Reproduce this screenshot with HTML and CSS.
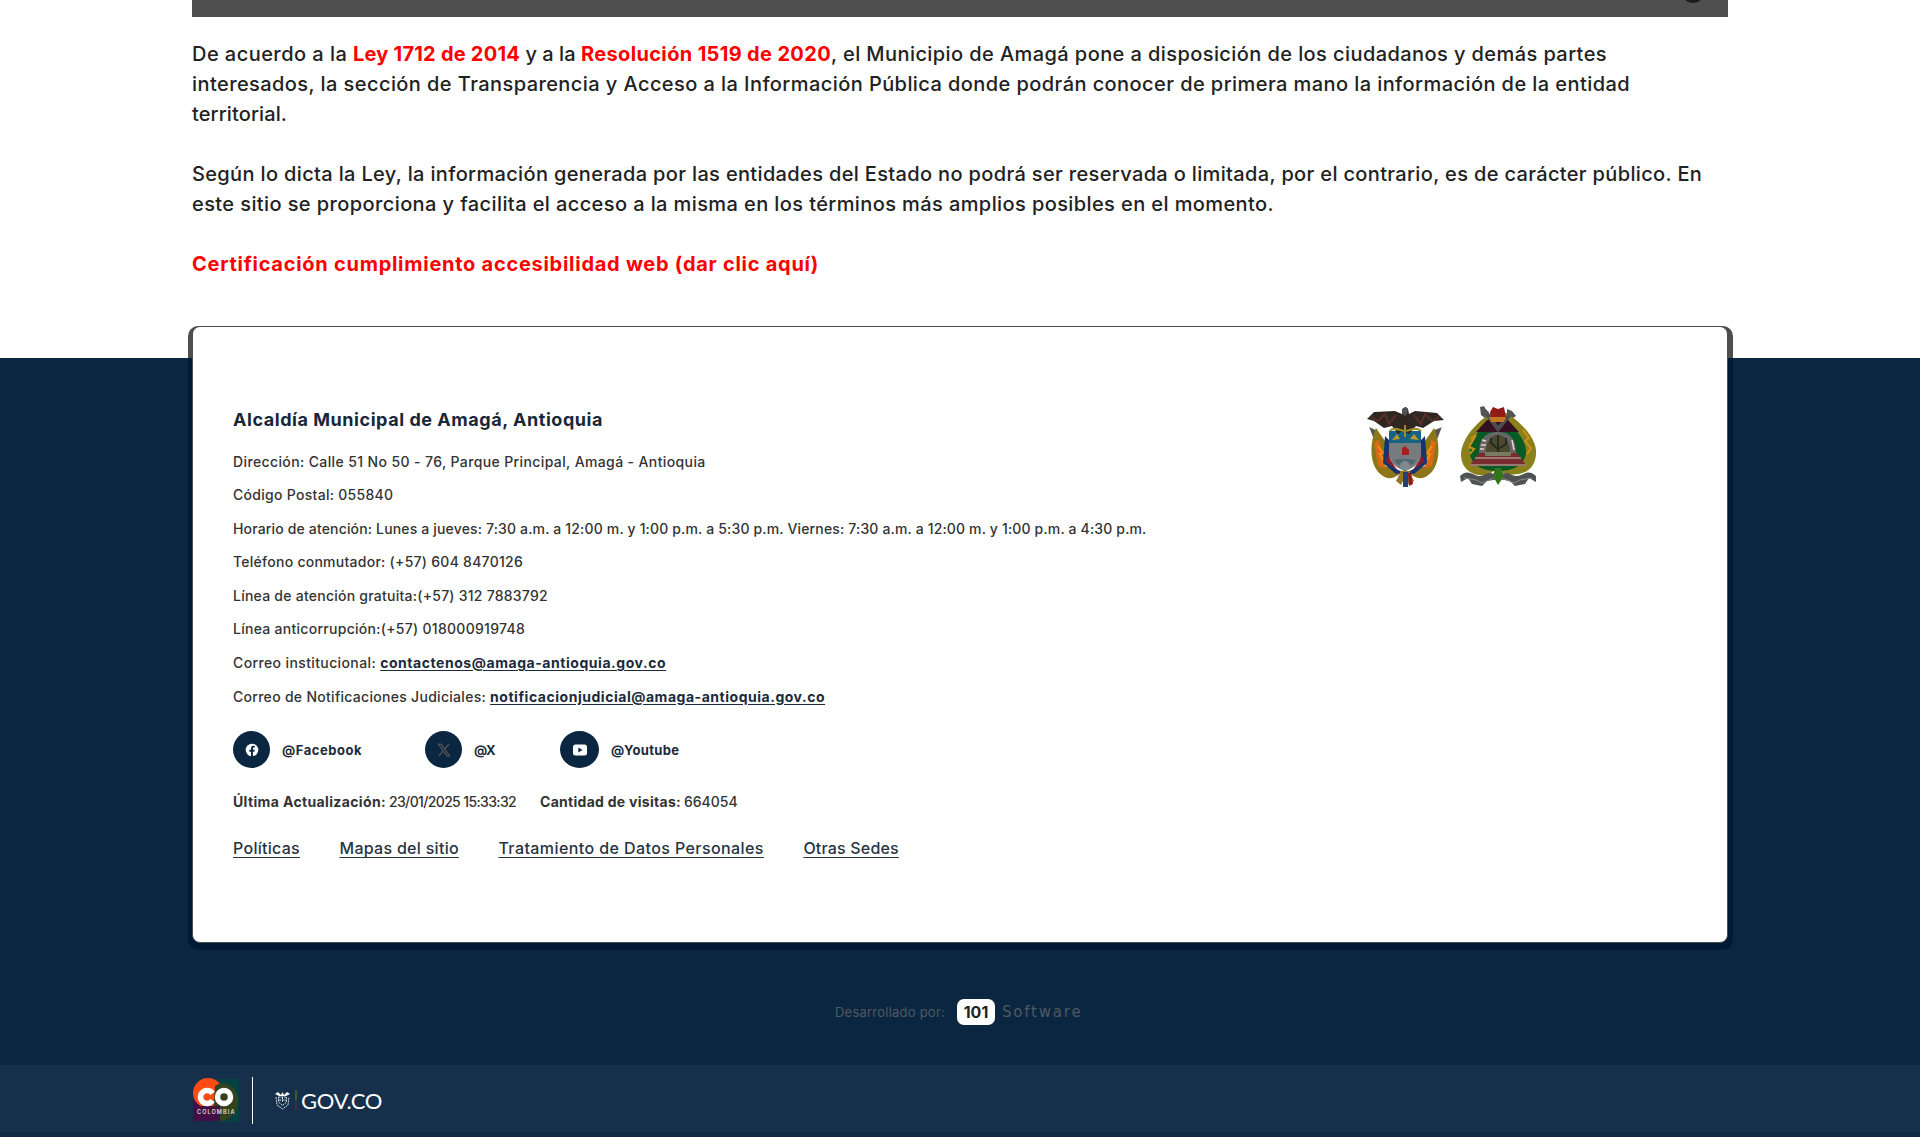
FILE: index.html
```html
<!DOCTYPE html>
<html lang="es">
<head>
<meta charset="utf-8">
<title>Transparencia - Alcaldía Municipal de Amagá</title>
<link rel="stylesheet" href="styles.css">
</head>
<body>
<main class="content">
  <div class="banner"><span class="banner-dot"></span></div>
  <div class="intro">
    <p><span class="t45">De acuerdo a la </span><a class="law t23">Ley 1712 de 2014</a><span class="t05"> y a la </span><a class="law t35">Resolución 1519 de 2020</a><span class="t42">, el Municipio de Amagá pone a disposición de los ciudadanos y demás partes</span>
<span class="t43">interesados, la sección de Transparencia y Acceso a la Información Pública donde podrán conocer de primera mano la información de la entidad</span>
<span class="t12">territorial.</span></p>
    <p><span class="t35">Según lo dicta la Ley, la información generada por las entidades del Estado no podrá ser reservada o limitada, por el contrario, es de carácter público. En</span>
<span class="t40">este sitio se proporciona y facilita el acceso a la misma en los términos más amplios posibles en el momento.</span></p>
    <p><a class="law t73">Certificación cumplimiento accesibilidad web (dar clic aquí)</a></p>
  </div>
</main>
<footer class="footer">
  <div class="card-frame">
    <section class="card">
      <div class="info">
        <h2 class="t55">Alcaldía Municipal de Amagá, Antioquia</h2>
        <div class="row t38">Dirección: Calle 51 No 50 - 76, Parque Principal, Amagá - Antioquia</div>
        <div class="row t29">Código Postal: 055840</div>
        <div class="row t16">Horario de atención: Lunes a jueves: 7:30 a.m. a 12:00 m. y 1:00 p.m. a 5:30 p.m. Viernes: 7:30 a.m. a 12:00 m. y 1:00 p.m. a 4:30 p.m.</div>
        <div class="row t26">Teléfono conmutador: (+57) 604 8470126</div>
        <div class="row t24">Línea de atención gratuita:(+57) 312 7883792</div>
        <div class="row t28">Línea anticorrupción:(+57) 018000919748</div>
        <div class="row"><span class="t38">Correo institucional: </span><a class="mail t55">contactenos@amaga-antioquia.gov.co</a></div>
        <div class="row"><span class="t29">Correo de Notificaciones Judiciales: </span><a class="mail t52">notificacionjudicial@amaga-antioquia.gov.co</a></div>
        <div class="social">
          <a class="network facebook"><span class="disc"><svg width="14" height="14" viewBox="0 0 14 14"><circle cx="7" cy="7" r="6.3" fill="#fff"/><path d="M6 14V8.7H4.3V6.8H6V5.3C6 3.6 7 2.8 8.4 2.8h1.4v1.6h-1c-.7 0-.9.4-.9 1v1.4h1.8l-.3 1.9H7.9V14z" fill="#0b2641"/></svg></span><span class="t52">@Facebook</span></a>
          <a class="network x"><span class="disc"><svg width="14" height="14" viewBox="0 0 14 14" fill="none" stroke="#505254"><path d="M1.5 1.2h2.7l8.3 11.6H9.800z" stroke-width="1.3"/><path d="M12 1L7.800 6M6.200 8L1.800 13" stroke-width="1.4"/></svg></span><span class="tn4">@X</span></a>
          <a class="network youtube"><span class="disc"><svg width="16" height="14" viewBox="0 0 16 14"><rect x="1" y="1.500" width="14" height="11" rx="2.500" fill="#fff"/><path d="M6.300 4.400v5.200L10.500 7z" fill="#0b2641"/></svg></span><span class="t36">@Youtube</span></a>
        </div>
        <div class="stats">
          <div class="updated"><b class="t36">Última Actualización:</b><span class="tn64">23/01/2025 15:33:32</span></div>
          <div class="visits"><b class="t28">Cantidad de visitas:</b><span>664054</span></div>
        </div>
        <nav class="links">
          <a class="t28">Políticas</a><a class="t29">Mapas del sitio</a><a class="t41">Tratamiento de Datos Personales</a><a class="t19">Otras Sedes</a>
        </nav>
      </div>
      <div class="arms">
        <svg width="78" height="82" viewBox="0 0 78 82">
          <path d="M9 25L5 23l5 13zM69 25l5-2-5 13z" fill="#555" stroke="#555" stroke-width="2"/>
          <path d="M10 22C4 35 2 61 17 70c9 6 17-2 22-7 5 5 13 13 22 7 15-9 13-35 7-48l-9 13v25L39 66 19 60V35z" fill="#8b7618"/>
          <path d="M8 36l5-2 3 17 4 12-8-3zM70 36l-5-2-3 17-4 12 8-3z" fill="#d96918"/>
          <path d="M12 40l5 7-3 1 5 10M66 40l-5 7 3 1-5 10" fill="none" stroke="#ff8a12" stroke-width="2"/>
          <path d="M19 30l5 5v23l12 9-6 1-13-11zM59 30l-5 5v23l-12 9 6 1 13-11z" fill="#16356f"/>
          <path d="M24 42l-4 14 11 8-7-11zM54 42l4 14-11 8 7-11z" fill="#8c1b28"/>
          <path d="M23 25h32v23c0 8-7 14-16 17-9-3-16-9-16-17z" fill="#777b7d"/>
          <path d="M23 25h32v12H23z" fill="#176182"/>
          <path d="M26 34l5-6 3 5zM44 33l4-5 5 6z" fill="#b99a27"/>
          <path d="M36 42l3-2 4 4v5h-7z" fill="#a6201b"/>
          <path d="M28 54q11-2 22 0l-3 4-8 3-8-3z" fill="#4f6870"/>
          <circle cx="39" cy="60" r="5" fill="#7e8990"/>
          <path d="M1 13L8 6 29 5l7 3 1-5 3-2 2 2 1 5 6-3 22 2 7 7-10 1-11 7-7-2-7 8-6-3-5 3-6-8-8 2-10-7z" fill="#302722"/>
          <path d="M5 11l7 4 7-7 4 10 7-9M73 11l-7 4-7-7-4 10-7-9" fill="none" stroke="#5b3029" stroke-width="2"/>
          <path d="M36 3l3-2 3 2-1 5-2 2-3-2z" fill="#505151"/>
          <path d="M24 25c3-5 11 0 15 0s12-5 16 0M39 19v12" fill="none" stroke="#9b8f27" stroke-width="2"/>
          <path d="M35 65l-5 10 5 4 4-8 4 8 5-4-5-10z" fill="#967822"/>
          <path d="M37 66h5v15h-5z" fill="#253f77"/><path d="M42 67h3l2 11-4 2z" fill="#8e1724"/>
        </svg>
        <svg width="80" height="82" viewBox="0 0 80 82">
          <path d="M40 3C30 7 4 27 3 48c0 17 14 23 27 21l7-5 11 4c18 3 31-5 30-24C76 25 50 6 40 3z" fill="#8b811c"/>
          <path d="M40 6C25 19 11 34 12 47c1 14 15 18 28 18s26-4 28-18C69 34 55 19 40 6z" fill="#075a24"/>
          <path d="M13 33l5-4-7 12 5 2-4 5M65 24l6 8-4 3 6 7-4 6" fill="none" stroke="#ce8e19" stroke-width="2"/>
          <path d="M29 14L18 26h43L50 14z" fill="#35101f"/>
          <path d="M26 4L40 23 54 6" fill="none" stroke="#4c4e4f" stroke-width="4"/>
          <path d="M22 1l4-1 2 4 3 2-4 6-4-3zM49 3l5 2 4 5-3 2-6-4z" fill="#535657"/>
          <path d="M32 6l3-5 5 2 6-2 2 11H33z" fill="#921b18"/><path d="M31 11h17l-2 5H33z" fill="#c17823"/>
          <path d="M21 47c0-15 7-21 19-21s18 7 18 21z" fill="#666"/>
          <path d="M28 46c0-12 6-17 12-17s12 5 12 17z" fill="#4c492e"/>
          <path d="M33 32v5l7 6 8-5v-6M40 29v18" fill="none" stroke="#202b21" stroke-width="2"/>
          <path d="M24 34l4 1M23 39h5M22 43h4M54 34l2 10" stroke="#f0d4d0" stroke-width="1.500"/>
          <path d="M21 47h38l9 12H12z" fill="#782c2d"/><path d="M17 52h46M12 59h56" stroke="#9a7770" stroke-width="2"/>
          <path d="M27 46h26v4H27z" fill="#767b62"/>
          <path d="M2 70c8-8 13 0 20 0 5 0 7-5 14-2l6 5-13 2-5 5-10-2-4-6-7 4zM78 70c-8-8-13 0-20 0-5 0-7-5-14-2l-4 5 12 2 5 5 10-2 4-6 7 4z" fill="#505353"/>
          <path d="M6 72l12 2 6 3 12-5M74 72l-12 2-6 3-12-5" fill="none" stroke="#888" stroke-width="1"/>
          <path d="M37 62h6l3 8-6 9-5-9z" fill="#34741d"/>
        </svg>
      </div>
    </section>
  </div>
  <div class="credits"><span class="t23">Desarrollado por:</span><b class="badge">101</b><span class="brand">Software</span></div>
</footer>
<div class="gov-bar">
  <svg width="48" height="48" viewBox="0 0 48 48">
    <path d="M22 3h25v43H22z" fill="#064143"/>
    <path d="M1 23h29v22H1z" fill="#421047"/>
    <circle cx="16" cy="17" r="15" fill="#ff4b16"/>
    <path d="M23 10c11-7 23 2 23 15 0 14-10 19-18 20l-7-9z" fill="#34431e"/>
    <path d="M1 30h27v15H1z" fill="#421047"/>
    <path d="M20.500 17.500a6.500 6.500 0 1 0 0 7" fill="none" stroke="#fff" stroke-width="5.500"/>
    <circle cx="32" cy="21" r="6.500" fill="none" stroke="#fff" stroke-width="5.500"/>
    <text x="5" y="38" class="country">COLOMBIA</text>
  </svg>
  <span class="divider"></span>
  <svg width="15" height="19" viewBox="0 0 15 19" fill="none" stroke="#d4dce2">
    <path d="M0 3l3-2 3 3 1.500-3L9 4l3-3 3 2-4 2H4z" fill="#fff" stroke="none"/>
    <path d="M1 6l1 8 5.500 4L13 14l1-8M3.500 6h8v5l-4 3.500-4-3.500zM4 9h7M7.500 6v5" stroke-dasharray="2 .7"/>
  </svg>
  <span class="flag"></span>
  <span class="gov">GOV.CO</span>
</div>
</body>
</html>
```
FILE: styles.css
```css
* { box-sizing: border-box; }
body { margin: 0; height: 1137px; overflow: hidden; background: #fff; color: #222; font-family: Inter, "Noto Sans", sans-serif; }
p, h2 { margin: 0; }

.content { width: 1536px; height: 358px; margin: 0 auto; }
.banner { height: 17px; background: #4f4f4f; overflow: hidden; display: flex; justify-content: flex-end; align-items: flex-end; padding: 0 23px 14px 0; }
.banner-dot { flex: none; width: 24px; height: 24px; border-radius: 50%; background: #1b1b1b; }
.intro { padding-top: 22px; display: flex; flex-direction: column; gap: 30px; white-space: pre; font-size: 20px; font-weight: 500; line-height: 30px; }
.law { color: #f00; font-weight: 700; }

.footer { height: 707px; background: #0b2641; display: flow-root; }
.card-frame { width: 1545px; height: 624px; margin: -32px auto 0; padding: 0 4.5px 7px; border-radius: 10px; background: linear-gradient(#4e4e4e 32px, #001a33 32px); }
.card { height: 617px; border-radius: 8px; background: #fff; border: 1px solid #4a4d50; display: flex; }
.info { width: 1173px; padding: 78px 0 0 40px; font-size: 14px; font-weight: 500; color: #333; white-space: nowrap; }
.info h2 { margin-bottom: 9.5px; line-height: 30px; font-size: 18px; font-weight: 700; color: #182838; }
.row { line-height: 33.6px; white-space: pre; }
.mail { font-weight: 700; color: #1b2b3b; text-decoration: underline; text-underline-offset: 2px; }

.social { display: flex; margin-top: 18px; height: 37px; font-size: 13px; font-weight: 700; color: #1b2b3b; }
.network { display: flex; align-items: center; gap: 12px; }
.facebook { width: 192px; }
.x { width: 135px; }
.disc { width: 37px; height: 37px; border-radius: 50%; background: #0b2641; display: flex; align-items: center; justify-content: center; }
.youtube .disc { width: 39px; }
.stats { display: flex; margin-top: 19px; line-height: 30px; }
.stats div { display: flex; gap: 3px; }
.updated { width: 307px; }
.links { display: flex; gap: 39.5px; margin-top: 16px; line-height: 30px; font-size: 16px; color: #263442; text-decoration: underline; text-underline-offset: 3px; text-decoration-thickness: 1px; }

.arms { display: flex; gap: 14px; padding-top: 79px; }

.credits { display: flex; align-items: center; height: 30px; margin: 47px 0 0 835px; font-size: 13px; color: #505860; }
.badge { display: flex; align-items: center; justify-content: center; width: 38px; height: 26px; margin: 0 7px 0 12px; border-radius: 7px; background: #fff; color: #222; font-size: 16px; }
.brand { font-family: "DejaVu Sans", sans-serif; font-size: 15px; letter-spacing: 1.8px; }

.gov-bar { display: flex; align-items: center; height: 72px; padding: 0 0 2px 192px; background: linear-gradient(#162f4b 67px, #102a46 67px); color: #fff; }
.country { font-family: Inter, sans-serif; font-size: 5.5px; font-weight: 600; letter-spacing: 1.1px; fill: #ddd; }
.divider { width: 1px; height: 47px; margin: 0 22px 0 12px; background: #fff; }
.flag { width: 2px; height: 20px; margin: 0 4px 0 5px; background: linear-gradient(#45552c 50%, #233852 50% 75%, #4b2941 75%); }
.gov { font-family: Lato, sans-serif; font-size: 22px; letter-spacing: -.37px; }

/* tracking steps, in hundredths of a pixel */
.t05 { letter-spacing: .05px; }
.t12 { letter-spacing: .12px; }
.t16 { letter-spacing: .158px; }
.t19 { letter-spacing: .188px; }
.t23 { letter-spacing: .229px; }
.t24 { letter-spacing: .243px; }
.t26 { letter-spacing: .262px; }
.t28 { letter-spacing: .28px; }
.t29 { letter-spacing: .29px; }
.t35 { letter-spacing: .348px; }
.t36 { letter-spacing: .358px; }
.t38 { letter-spacing: .38px; }
.t40 { letter-spacing: .401px; }
.t41 { letter-spacing: .414px; }
.t42 { letter-spacing: .416px; }
.t43 { letter-spacing: .425px; }
.t45 { letter-spacing: .453px; }
.t52 { letter-spacing: .525px; }
.t55 { letter-spacing: .547px; }
.t73 { letter-spacing: .73px; }
.tn4 { letter-spacing: -.406px; }
.tn64 { letter-spacing: -.642px; }
```
